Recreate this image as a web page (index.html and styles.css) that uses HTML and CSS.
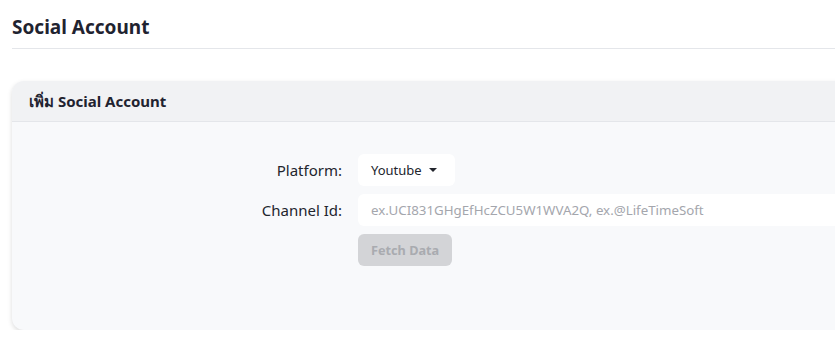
FILE: index.html
```html
<!DOCTYPE html>
<html lang="th">
<head>
    <meta charset="UTF-8">
    <meta name="viewport" content="width=device-width, initial-scale=1.0">
    <title>Social Account</title>
    <link rel="stylesheet" href="styles.css">
</head>
<body>
    <div class="page">
        <h1 class="page-title">Social Account</h1>

        <div class="card">
            <div class="card-header">เพิ่ม Social Account</div>
            <div class="card-body">
                <form class="form-grid">
                    <label class="form-label">Platform:</label>
                    <div class="form-control">
                        <button type="button" class="select-btn">
                            Youtube
                            <span class="caret"></span>
                        </button>
                    </div>

                    <label class="form-label">Channel Id:</label>
                    <div class="form-control">
                        <input class="text-input" type="text" placeholder="ex.UCI831GHgEfHcZCU5W1WVA2Q, ex.@LifeTimeSoft">
                    </div>

                    <div></div>
                    <div class="form-control">
                        <button type="button" class="fetch-btn" disabled>Fetch Data</button>
                    </div>
                </form>
            </div>
        </div>
    </div>
</body>
</html>
```

FILE: styles.css
```css
html, body {
    overflow: hidden;
}

body {
    margin: 0;
    background: #fff;
    color: #1f2330;
    font-family: "Noto Sans", "Open Sans", sans-serif;
}

.page {
    width: 1100px;
    padding: 0 0 0 12px;
}

.page-title {
    margin: 0;
    padding: 15px 0 9px;
    font-size: 19px;
    font-weight: 700;
    line-height: 24px;
    border-bottom: 1px solid #e4e6ea;
}

.card {
    margin-top: 32px;
    border-radius: 12px;
    background: #f8f9fb;
    box-shadow: 0 2px 5px rgba(0, 0, 0, 0.14);
    overflow: hidden;
}

.card-header {
    height: 40px;
    line-height: 40px;
    padding-left: 17px;
    background: #f1f2f4;
    border-bottom: 1px solid #e4e6ea;
    font-size: 15px;
    font-weight: 700;
}

.card-body {
    padding: 32px 0 64px;
}

.form-grid {
    display: grid;
    grid-template-columns: 330px 1fr;
    column-gap: 16px;
    row-gap: 8px;
}

.form-label {
    text-align: right;
    font-size: 15px;
    line-height: 32px;
    color: #22252d;
}

.form-control {
    display: flex;
    align-items: center;
}

.select-btn {
    display: flex;
    align-items: center;
    gap: 7px;
    height: 32px;
    padding: 0 18px 0 13px;
    border: none;
    border-radius: 6px;
    background: #fff;
    color: #22252d;
    font-family: inherit;
    font-size: 13px;
}

.caret {
    width: 0;
    height: 0;
    border-left: 4px solid transparent;
    border-right: 4px solid transparent;
    border-top: 4px solid #22252d;
}

.text-input {
    width: 100%;
    height: 32px;
    box-sizing: border-box;
    padding: 0 13px;
    border: none;
    border-radius: 6px;
    background: #fff;
    font-family: inherit;
    font-size: 13.3px;
    outline: none;
}

.text-input::placeholder {
    color: #a4a6ad;
}

.fetch-btn {
    height: 32px;
    padding: 0 13px;
    border: none;
    border-radius: 6px;
    background: #d3d4d7;
    color: #a9abb0;
    font-family: inherit;
    font-size: 12.7px;
    font-weight: 700;
}
```
